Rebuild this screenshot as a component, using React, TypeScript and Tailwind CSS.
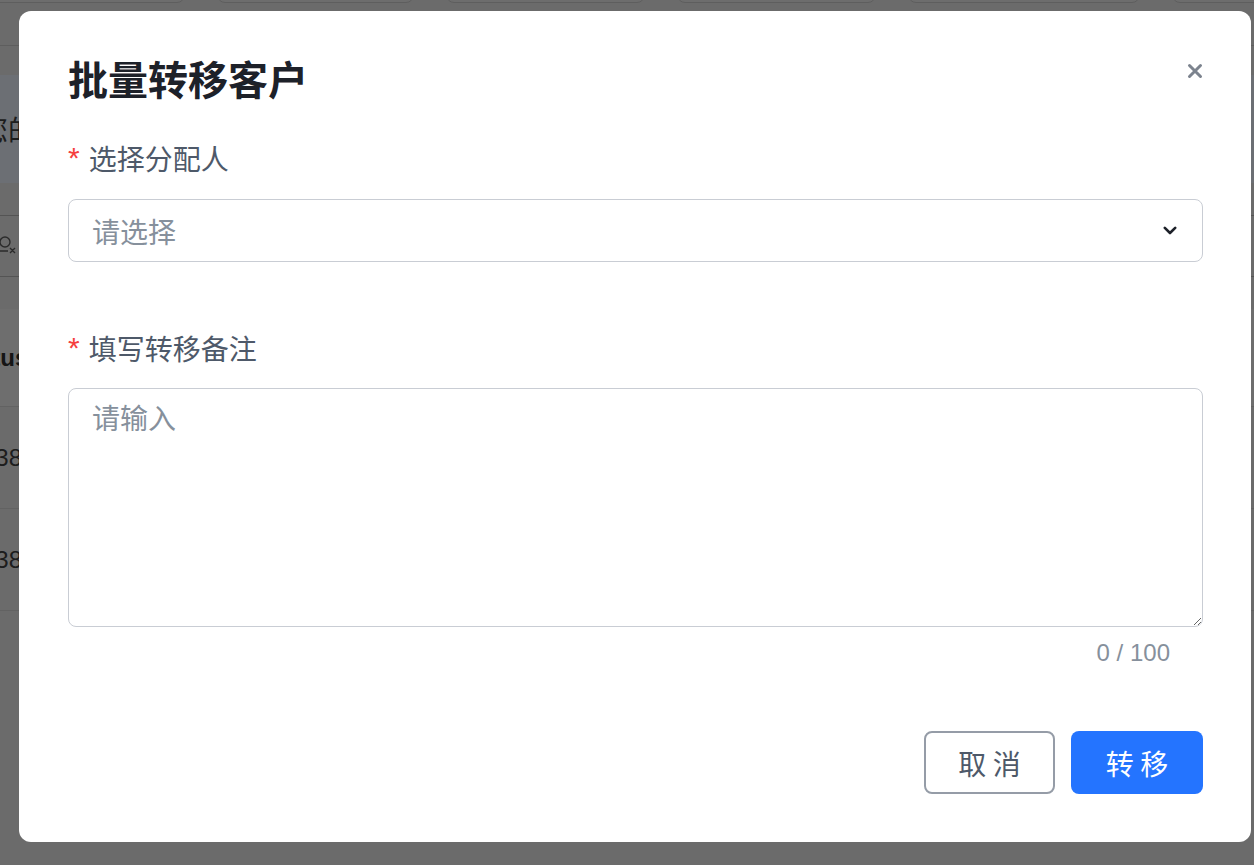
import { useState } from "react";

const tabWidths = [199, 197, 199, 199, 232, 200];
const rows = ["138 0013 8000", "138 0013 8001"];

function CloseIcon() {
  return (
    <svg width="16" height="16" viewBox="0 0 16 16" fill="none">
      <path
        d="M2.5 2.5 L13.5 13.5 M13.5 2.5 L2.5 13.5"
        stroke="#7c838e"
        strokeWidth="3"
        strokeLinecap="round"
      />
    </svg>
  );
}

function ChevronDown() {
  return (
    <svg width="14" height="9" viewBox="0 0 14 9" fill="none">
      <path
        d="M1.8 1.8 L7 7 L12.2 1.8"
        stroke="#1d2129"
        strokeWidth="2.6"
        strokeLinecap="round"
        strokeLinejoin="round"
      />
    </svg>
  );
}

function Label({ text }: { text: string }) {
  return (
    <div className="flex items-center h-[40px] leading-[40px] text-[28px] text-[#4e5969]">
      <span className="font-['Liberation_Sans',sans-serif] text-[30px] text-[#f53f3f] mr-[9px] leading-[40px]">
        *
      </span>
      <span>{text}</span>
    </div>
  );
}

export default function App() {
  const [remark, setRemark] = useState<string>("");

  return (
    <div className="relative h-[865px] w-[1254px] overflow-hidden bg-[#d6d6d6] font-['Noto_Sans_CJK_SC',sans-serif]">
      {/* page behind the dialog */}
      <div className="h-[46px] border-b border-[#bcbcbc] overflow-hidden">
        <div className="flex gap-[32px] -ml-[14px] -mt-[37px]">
          {tabWidths.map((w, i) => (
            <div
              key={i}
              className="h-[40px] shrink-0 rounded-lg border border-[#bdbdbd] bg-[#dadada]"
              style={{ width: w }}
            />
          ))}
        </div>
      </div>

      <div className="mt-[29px] h-[108px] bg-[#d9dee8] flex items-center overflow-hidden">
        <span className="-ml-[20px] text-[28px] text-[#3a3a3a] whitespace-nowrap">
          您的客户
        </span>
      </div>

      <div className="mt-[32px] h-[62px] border-y border-[#a8a8a8] flex items-center">
        <svg width="20" height="20" viewBox="0 0 20 20" fill="none" className="-ml-[1px]">
          <circle cx="6" cy="6" r="5" stroke="#555" strokeWidth="1.4" />
          <path d="M1 15 H9 M11 12 L16 17 M16 12 L11 17" stroke="#555" strokeWidth="1.4" />
        </svg>
      </div>

      <div className="mt-[32px] h-[98px] bg-[#dcdcdc] border-b border-[#c4c4c4] flex items-center overflow-hidden">
        <span className="-ml-[45px] font-['Liberation_Sans',sans-serif] font-bold text-[24px] text-[#2a2a2a]">
          Status
        </span>
      </div>

      {rows.map((r) => (
        <div
          key={r}
          className="h-[102px] border-b border-[#c4c4c4] flex items-center overflow-hidden"
        >
          <span className="-ml-[18px] font-['Liberation_Sans',sans-serif] text-[24px] text-[#3a3a3a] whitespace-nowrap">
            {r}
          </span>
        </div>
      ))}

      {/* overlay + dialog */}
      <div className="absolute inset-0 bg-black/50 pt-[11px] pl-[19px]">
        <div className="w-[1232px] rounded-[12px] bg-white pl-[49px] pr-[48px] pt-[43px] pb-[48px]">
          <div className="flex items-start justify-between">
            <h2 className="text-[40px] leading-[48px] font-bold text-[#1d2129]">
              批量转移客户
            </h2>
            <button className="mt-[9px]">
              <CloseIcon />
            </button>
          </div>

          <div className="mt-[36px]">
            <Label text="选择分配人" />
          </div>
          <div className="mt-[21px] h-[63px] flex items-center justify-between rounded-[8px] border border-[#c9cdd4] pl-[23px] pr-[25px]">
            <span className="text-[28px] text-[#86909c]">请选择</span>
            <ChevronDown />
          </div>

          <div className="mt-[66px]">
            <Label text="填写转移备注" />
          </div>
          <textarea
            value={remark}
            maxLength={100}
            onChange={(event) => setRemark(event.target.value)}
            placeholder="请输入"
            className="mt-[20px] block w-full h-[239px] rounded-[8px] border border-[#c9cdd4] px-[23px] py-[8px] text-[28px] leading-[40px] text-[#1d2129] placeholder:text-[#86909c] outline-none"
          />
          <div className="mt-[10px] pr-[33px] text-right font-['Liberation_Sans',sans-serif] text-[24px] leading-[32px] text-[#86909c]">
            {remark.length} / 100
          </div>

          <div className="mt-[62px] flex justify-end gap-[16px]">
            <button className="w-[131px] h-[63px] rounded-[8px] border-2 border-[#959ca7] bg-white text-[28px] text-[#4e5969]">
              取 消
            </button>
            <button className="w-[132px] h-[63px] rounded-[8px] bg-[#2474ff] text-[28px] text-white">
              转 移
            </button>
          </div>
        </div>
      </div>
    </div>
  );
}
